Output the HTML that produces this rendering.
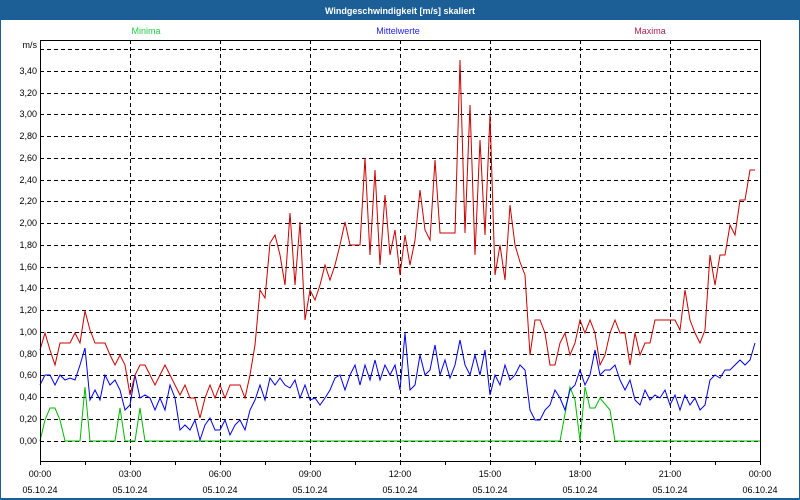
<!DOCTYPE html>
<html><head><meta charset="utf-8"><style>
html,body{margin:0;padding:0;width:800px;height:500px;overflow:hidden;background:#fff}
svg{display:block}
text{font-family:"Liberation Sans",sans-serif;font-size:9px}
</style></head><body>
<svg width="800" height="500" viewBox="0 0 800 500">
<rect x="0" y="0" width="800" height="500" fill="#1c5f96"/>
<rect x="1" y="20" width="798" height="478" fill="#fff"/>
<text x="400" y="14" fill="#fff" font-weight="bold" font-size="10" text-anchor="middle">Windgeschwindigkeit [m/s] skaliert</text>
<text x="146" y="34" fill="#22cc44" text-anchor="middle">Minima</text>
<text x="398" y="34" fill="#2222ee" text-anchor="middle">Mittelwerte</text>
<text x="650" y="34" fill="#aa2255" text-anchor="middle">Maxima</text>
<text x="37" y="48" text-anchor="end" fill="#000">m/s</text>
<g stroke="#000" stroke-dasharray="4,3" stroke-width="1">
<line x1="40" y1="49.5" x2="760" y2="49.5"/><line x1="40" y1="71.5" x2="760" y2="71.5"/><line x1="40" y1="93.5" x2="760" y2="93.5"/><line x1="40" y1="114.5" x2="760" y2="114.5"/><line x1="40" y1="136.5" x2="760" y2="136.5"/><line x1="40" y1="158.5" x2="760" y2="158.5"/><line x1="40" y1="180.5" x2="760" y2="180.5"/><line x1="40" y1="201.5" x2="760" y2="201.5"/><line x1="40" y1="223.5" x2="760" y2="223.5"/><line x1="40" y1="245.5" x2="760" y2="245.5"/><line x1="40" y1="267.5" x2="760" y2="267.5"/><line x1="40" y1="288.5" x2="760" y2="288.5"/><line x1="40" y1="310.5" x2="760" y2="310.5"/><line x1="40" y1="332.5" x2="760" y2="332.5"/><line x1="40" y1="354.5" x2="760" y2="354.5"/><line x1="40" y1="375.5" x2="760" y2="375.5"/><line x1="40" y1="397.5" x2="760" y2="397.5"/><line x1="40" y1="419.5" x2="760" y2="419.5"/><line x1="40" y1="441.5" x2="760" y2="441.5"/>
<line x1="130.5" y1="40" x2="130.5" y2="461"/><line x1="220.5" y1="40" x2="220.5" y2="461"/><line x1="310.5" y1="40" x2="310.5" y2="461"/><line x1="400.5" y1="40" x2="400.5" y2="461"/><line x1="490.5" y1="40" x2="490.5" y2="461"/><line x1="580.5" y1="40" x2="580.5" y2="461"/><line x1="670.5" y1="40" x2="670.5" y2="461"/>
</g>
<g fill="#000" text-anchor="end">
<text x="37" y="74">3,40</text><text x="37" y="96">3,20</text><text x="37" y="117">3,00</text><text x="37" y="139">2,80</text><text x="37" y="161">2,60</text><text x="37" y="183">2,40</text><text x="37" y="204">2,20</text><text x="37" y="226">2,00</text><text x="37" y="248">1,80</text><text x="37" y="270">1,60</text><text x="37" y="291">1,40</text><text x="37" y="313">1,20</text><text x="37" y="335">1,00</text><text x="37" y="357">0,80</text><text x="37" y="378">0,60</text><text x="37" y="400">0,40</text><text x="37" y="422">0,20</text><text x="37" y="444">0,00</text>
</g>
<polyline fill="none" stroke="#00bb00" points="40,441 45,420 50,408 55,408 60,420 65,441 80,441 85,387 90,441 115,441 120,408 125,441 135,441 140,408 145,441 560,441 570,387 575,400 580,441 585,387 590,408 595,408 600,398 610,410 615,441 760,441"/>
<polyline fill="none" stroke="#0000ee" points="40,385 45,375 50,375 55,385 60,375 65,380 70,378 75,380 80,365 85,348 90,400 95,390 100,400 105,375 110,385 115,380 120,390 125,410 130,405 135,375 140,398 145,395 150,398 155,410 160,398 165,410 170,385 175,398 180,430 185,425 190,430 195,420 200,440 205,425 210,418 215,430 220,430 225,420 230,435 235,425 240,420 245,430 250,410 255,400 260,385 265,400 270,378 275,385 280,378 285,385 290,388 295,380 300,398 305,385 310,400 315,398 320,405 325,398 330,390 335,378 340,375 345,390 350,375 355,365 360,385 365,365 370,380 375,360 380,380 385,365 390,375 395,365 400,390 405,333 410,390 415,385 420,355 425,375 430,370 435,345 440,375 445,360 450,378 455,365 460,340 465,365 470,375 475,355 480,375 485,350 490,395 495,375 500,385 505,365 510,380 515,375 520,365 525,370 530,410 535,420 540,420 545,410 550,405 555,390 560,398 565,410 570,390 575,385 580,370 585,385 590,375 595,350 600,375 605,370 610,370 615,365 620,380 625,390 630,380 635,400 640,405 645,390 650,400 655,395 660,398 665,390 670,405 675,395 680,410 685,395 690,405 695,398 700,410 705,405 710,380 715,375 720,378 725,370 730,370 735,365 740,360 745,365 750,360 755,343"/>
<polyline fill="none" stroke="#cc0000" points="40,350 45,333 50,350 55,365 60,343 65,343 70,343 75,333 80,343 85,311 90,330 95,343 100,343 105,343 110,355 115,365 120,355 125,365 130,395 135,375 140,365 145,365 150,375 155,385 160,375 165,365 170,375 175,385 180,395 185,385 190,398 195,398 200,418 205,398 210,385 215,398 220,385 225,398 230,385 235,385 240,385 245,398 250,375 255,345 260,290 265,298 270,243 275,235 280,255 285,285 290,213 295,285 300,222 305,320 310,290 315,300 320,285 325,265 330,280 335,265 340,245 345,222 350,245 355,245 360,245 365,158 370,255 375,170 380,265 385,195 390,255 395,230 400,275 405,235 410,265 415,240 420,190 425,230 430,240 435,160 440,233 445,233 450,233 455,233 460,60 465,233 470,105 475,255 480,140 485,235 490,115 495,275 500,245 505,280 510,205 515,245 520,262 525,275 530,355 535,320 540,320 545,333 550,365 555,365 560,343 565,333 570,355 575,343 580,320 585,333 590,320 595,333 600,365 605,355 610,333 615,320 620,333 625,333 630,365 635,333 640,355 645,343 650,343 655,320 660,320 665,320 670,320 675,320 680,330 685,290 690,320 695,333 700,343 705,330 710,255 715,285 720,255 725,255 730,225 735,235 740,200 745,200 750,170 755,170"/>
<rect x="40.5" y="40.5" width="720" height="421" fill="none" stroke="#000" stroke-width="1"/>
<g stroke="#000">
<line x1="40.5" y1="461" x2="40.5" y2="465"/><line x1="85.5" y1="461" x2="85.5" y2="465"/><line x1="130.5" y1="461" x2="130.5" y2="465"/><line x1="175.5" y1="461" x2="175.5" y2="465"/><line x1="220.5" y1="461" x2="220.5" y2="465"/><line x1="265.5" y1="461" x2="265.5" y2="465"/><line x1="310.5" y1="461" x2="310.5" y2="465"/><line x1="355.5" y1="461" x2="355.5" y2="465"/><line x1="400.5" y1="461" x2="400.5" y2="465"/><line x1="445.5" y1="461" x2="445.5" y2="465"/><line x1="490.5" y1="461" x2="490.5" y2="465"/><line x1="535.5" y1="461" x2="535.5" y2="465"/><line x1="580.5" y1="461" x2="580.5" y2="465"/><line x1="625.5" y1="461" x2="625.5" y2="465"/><line x1="670.5" y1="461" x2="670.5" y2="465"/><line x1="715.5" y1="461" x2="715.5" y2="465"/><line x1="760.5" y1="461" x2="760.5" y2="465"/>
</g>
<g fill="#000" text-anchor="middle">
<text x="40" y="477">00:00</text><text x="40" y="493">05.10.24</text>
<text x="130" y="477">03:00</text><text x="130" y="493">05.10.24</text>
<text x="220" y="477">06:00</text><text x="220" y="493">05.10.24</text>
<text x="310" y="477">09:00</text><text x="310" y="493">05.10.24</text>
<text x="400" y="477">12:00</text><text x="400" y="493">05.10.24</text>
<text x="490" y="477">15:00</text><text x="490" y="493">05.10.24</text>
<text x="580" y="477">18:00</text><text x="580" y="493">05.10.24</text>
<text x="670" y="477">21:00</text><text x="670" y="493">05.10.24</text>
<text x="760" y="477">00:00</text><text x="760" y="493">06.10.24</text>
</g>
</svg>
</body></html>
